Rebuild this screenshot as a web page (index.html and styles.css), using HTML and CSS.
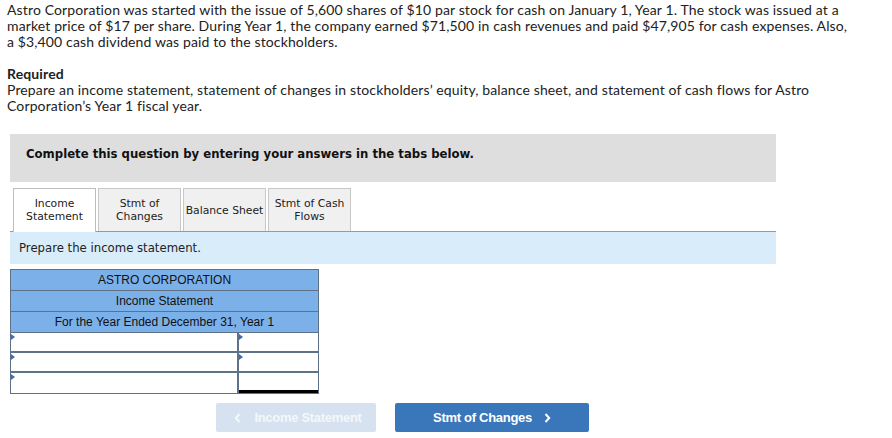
FILE: index.html
```html
<!DOCTYPE html>
<html>
<head>
<meta charset="utf-8">
<link rel="stylesheet" href="styles.css">
</head>
<body>
<div class="page">
  <p class="intro">Astro Corporation was started with the issue of 5,600 shares of $10 par stock for cash on January 1, Year 1. The stock was issued at a market price of $17 per share. During Year 1, the company earned $71,500 in cash revenues and paid $47,905 for cash expenses. Also, a $3,400 cash dividend was paid to the stockholders.</p>
  <p class="req-title">Required</p>
  <p class="req">Prepare an income statement, statement of changes in stockholders’ equity, balance sheet, and statement of cash flows for Astro Corporation’s Year 1 fiscal year.</p>

  <div class="panel">
    <div class="banner">Complete this question by entering your answers in the tabs below.</div>
    <div class="tabs">
      <div class="tab active">Income<br>Statement</div>
      <div class="tab">Stmt of<br>Changes</div>
      <div class="tab">Balance Sheet</div>
      <div class="tab">Stmt of Cash<br>Flows</div>
    </div>
    <div class="instr">Prepare the income statement.</div>

    <div class="stmt">
      <div class="hrow">ASTRO CORPORATION</div>
      <div class="hrow">Income Statement</div>
      <div class="hrow">For the Year Ended December 31, Year 1</div>
      <div class="drow"><div class="cell lab"><span class="mark"></span></div><div class="cell amt"><span class="mark"></span></div></div>
      <div class="drow"><div class="cell lab"><span class="mark"></span></div><div class="cell amt"><span class="mark"></span></div></div>
      <div class="drow last"><div class="cell lab"><span class="mark"></span></div><div class="cell amt total"></div></div>
    </div>

    <div class="nav">
      <div class="btn prev"><svg class="chev left" width="7" height="10" viewBox="0 0 7 10"><path d="M5.5 1 L1.8 5 L5.5 9" fill="none" stroke="currentColor" stroke-width="2"/></svg>Income Statement</div>
      <div class="btn next">Stmt of Changes<svg class="chev right" width="7" height="10" viewBox="0 0 7 10"><path d="M1.5 1 L5.2 5 L1.5 9" fill="none" stroke="currentColor" stroke-width="2"/></svg></div>
    </div>
  </div>
</div>
</body>
</html>
```

FILE: styles.css
```css
html, body { margin: 0; padding: 0; background: #fff; }
.page {
  padding: 2px 0 0 7px;
  font-family: "Lato", "Open Sans", sans-serif;
  color: #222;
  font-size: 14px;
  line-height: 16px;
}
.intro, .req, .req-title { letter-spacing: 0.13px; }
.intro { margin: 0; width: 850px; }
.req-title { margin: 16px 0 0 0; font-weight: bold; }
.req { margin: 0; width: 850px; }

.panel { margin-left: 3px; margin-top: 20px; width: 766px; }
.banner {
  background: #dedede;
  height: 48px;
  box-sizing: border-box;
  padding: 12px 0 0 16px;
  font-family: "DejaVu Sans", Verdana, sans-serif;
  font-weight: bold;
  font-size: 11.7px;
  line-height: 16px;
  color: #111;
}
.tabs {
  display: flex;
  gap: 2px;
  padding-left: 3px;
  margin-top: 6px;
  border-bottom: 1px solid #9a9a9a;
  height: 43px;
  align-items: flex-end;
}
.tab {
  width: 83px;
  height: 43px;
  box-sizing: border-box;
  border: 1px solid #c8c8c8;
  border-bottom: none;
  background: #f0f0f0;
  font-family: "DejaVu Sans", Verdana, sans-serif;
  font-size: 10.8px;
  line-height: 13px;
  color: #222;
  display: flex;
  align-items: center;
  justify-content: center;
  text-align: center;
}
.tab.active { background: #fff; height: 44px; margin-bottom: -1px; padding-bottom: 1px; border-color: #bdbdbd; }
.instr {
  background: #d9ecfa;
  height: 32px;
  display: flex;
  align-items: center;
  padding-left: 9px;
  font-family: "DejaVu Sans", Verdana, sans-serif;
  font-size: 11.7px;
  color: #222;
}

.stmt {
  margin-top: 5px;
  width: 309px;
  box-sizing: border-box;
  border: 1px solid #5f7189;
  font-family: "Liberation Sans", Arial, sans-serif;
  font-size: 12px;
}
.hrow {
  background: #7cb0e8;
  height: 20px;
  border-bottom: 1px solid #5f7189;
  display: flex;
  align-items: center;
  justify-content: center;
  color: #111;
}
.drow {
  display: flex;
  height: 20px;
}
.cell {
  position: relative;
  box-sizing: border-box;
  border: 2px solid #5f7189;
  border-top: 0;
  background: #fff;
}
.cell.lab { width: 228px; border-left: 0; border-right-width: 2px; }
.cell.amt { flex: 1; border-left: 0; border-right: 0; }
.cell.total { border-bottom: 3px solid #000; }
.drow.last .cell.lab { border-bottom: 0; }
.mark {
  position: absolute;
  left: 0;
  top: 1px;
  width: 0; height: 0;
  border-top: 3px solid transparent;
  border-bottom: 3px solid transparent;
  border-left: 4px solid #3d6fb0;
}

.nav {
  display: flex;
  gap: 19px;
  margin-top: 9px;
  margin-left: 206px;
  font-family: "Liberation Sans", Arial, sans-serif;
  font-size: 13px;
  font-weight: bold;
  letter-spacing: -0.3px;
}
.btn {
  height: 29px;
  display: flex;
  align-items: center;
  justify-content: center;
  border-radius: 2px;
  color: #fff;
  box-sizing: border-box;
}
.btn.prev { width: 160px; background: #d6e2ef; color: #f4f7fb; padding-left: 4px; }
.btn.next { width: 194px; background: #3a76ba; }
.chev.left { margin-right: 13px; }
.chev.right { margin-left: 12px; }
```
